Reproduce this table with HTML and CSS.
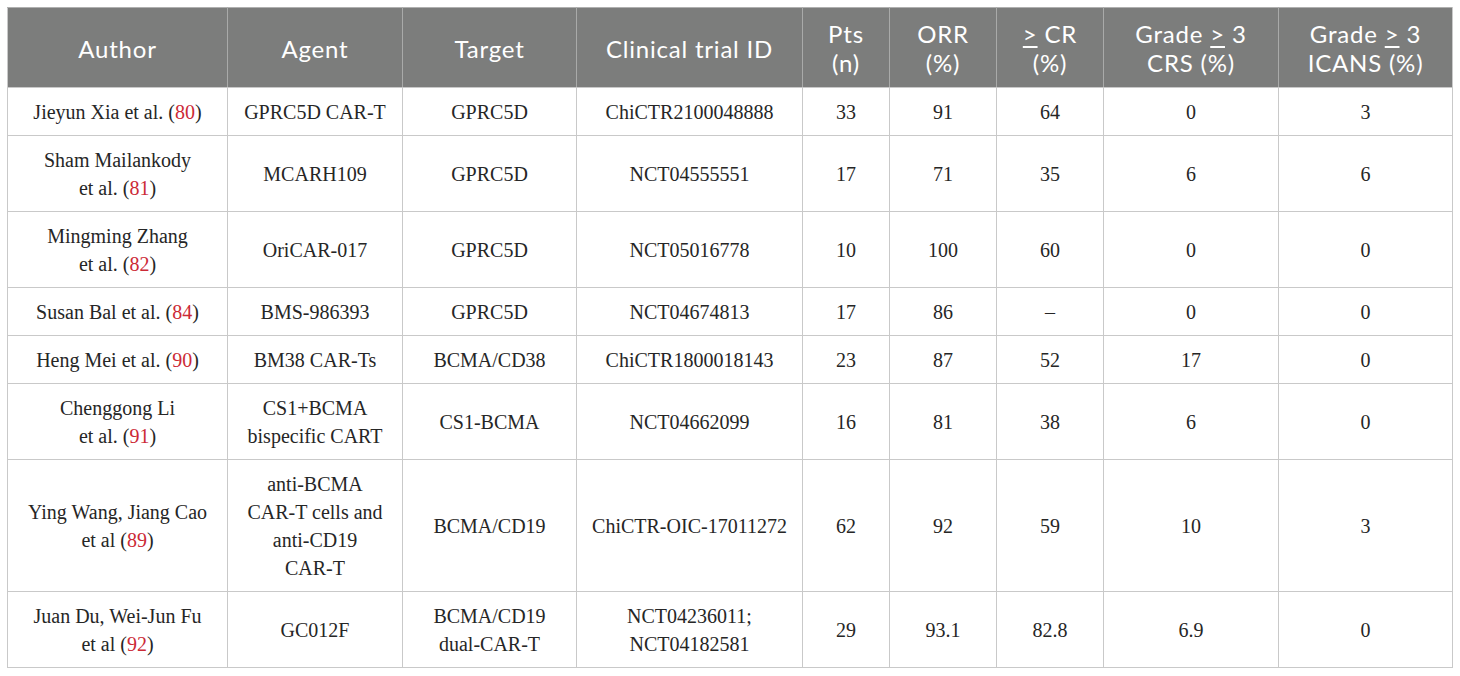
FILE: index.html
```html
<!DOCTYPE html>
<html lang="en">
<head>
<meta charset="utf-8">
<title>CAR-T trials</title>
<link rel="stylesheet" href="styles.css">
</head>
<body>
<table class="trials">
  <colgroup>
    <col class="c-author">
    <col class="c-agent">
    <col class="c-target">
    <col class="c-trial">
    <col class="c-pts">
    <col class="c-orr">
    <col class="c-cr">
    <col class="c-crs">
    <col class="c-icans">
  </colgroup>
  <thead>
    <tr>
      <th>Author</th>
      <th>Agent</th>
      <th>Target</th>
      <th>Clinical trial ID</th>
      <th>Pts<br>(n)</th>
      <th>ORR<br>(%)</th>
      <th><u>&gt;</u> CR<br>(%)</th>
      <th>Grade <u>&gt;</u> 3<br>CRS (%)</th>
      <th>Grade <u>&gt;</u> 3<br>ICANS (%)</th>
    </tr>
  </thead>
  <tbody>
    <tr>
      <td>Jieyun Xia et al. (<span class="ref">80</span>)</td>
      <td>GPRC5D CAR-T</td>
      <td>GPRC5D</td>
      <td>ChiCTR2100048888</td>
      <td>33</td><td>91</td><td>64</td><td>0</td><td>3</td>
    </tr>
    <tr>
      <td>Sham Mailankody<br>et al. (<span class="ref">81</span>)</td>
      <td>MCARH109</td>
      <td>GPRC5D</td>
      <td>NCT04555551</td>
      <td>17</td><td>71</td><td>35</td><td>6</td><td>6</td>
    </tr>
    <tr>
      <td>Mingming Zhang<br>et al. (<span class="ref">82</span>)</td>
      <td>OriCAR-017</td>
      <td>GPRC5D</td>
      <td>NCT05016778</td>
      <td>10</td><td>100</td><td>60</td><td>0</td><td>0</td>
    </tr>
    <tr>
      <td>Susan Bal et al. (<span class="ref">84</span>)</td>
      <td>BMS-986393</td>
      <td>GPRC5D</td>
      <td>NCT04674813</td>
      <td>17</td><td>86</td><td>–</td><td>0</td><td>0</td>
    </tr>
    <tr>
      <td>Heng Mei et al. (<span class="ref">90</span>)</td>
      <td>BM38 CAR-Ts</td>
      <td>BCMA/CD38</td>
      <td>ChiCTR1800018143</td>
      <td>23</td><td>87</td><td>52</td><td>17</td><td>0</td>
    </tr>
    <tr>
      <td>Chenggong Li<br>et al. (<span class="ref">91</span>)</td>
      <td>CS1+BCMA<br>bispecific CART</td>
      <td>CS1-BCMA</td>
      <td>NCT04662099</td>
      <td>16</td><td>81</td><td>38</td><td>6</td><td>0</td>
    </tr>
    <tr>
      <td>Ying Wang, Jiang Cao<br>et al (<span class="ref">89</span>)</td>
      <td>anti-BCMA<br>CAR-T cells and<br>anti-CD19<br>CAR-T</td>
      <td>BCMA/CD19</td>
      <td>ChiCTR-OIC-17011272</td>
      <td>62</td><td>92</td><td>59</td><td>10</td><td>3</td>
    </tr>
    <tr>
      <td>Juan Du, Wei-Jun Fu<br>et al (<span class="ref">92</span>)</td>
      <td>GC012F</td>
      <td>BCMA/CD19<br>dual-CAR-T</td>
      <td>NCT04236011;<br>NCT04182581</td>
      <td>29</td><td>93.1</td><td>82.8</td><td>6.9</td><td>0</td>
    </tr>
  </tbody>
</table>
</body>
</html>
```

FILE: styles.css
```css
html, body {
  margin: 0;
  padding: 0;
  background: #ffffff;
}

body {
  padding: 7px 0 0 7px;
}

.trials {
  border-collapse: collapse;
  table-layout: fixed;
  width: 1446px;
  border: 1px solid #c9c9c9;
}

.c-author { width: 220px; }
.c-agent  { width: 175px; }
.c-target { width: 174px; }
.c-trial  { width: 226px; }
.c-pts    { width: 87px; }
.c-orr    { width: 107px; }
.c-cr     { width: 107px; }
.c-crs    { width: 175px; }
.c-icans  { width: 174px; }

.trials th {
  background: #7c7d7c;
  color: #ffffff;
  font-family: Lato, "Open Sans", sans-serif;
  font-weight: 400;
  font-size: 24px;
  letter-spacing: 0.8px;
  line-height: 29px;
  padding: 11px 4px 10px;
  text-align: center;
  vertical-align: middle;
  border: 1px solid #c9c9c9;
  border-left-color: #a9aaa9;
  border-right-color: #a9aaa9;
  border-top-color: #b0b0b0;
}

.trials th:first-child { border-left-color: #c9c9c9; }
.trials th:last-child { border-right-color: #c9c9c9; }

.trials th u {
  text-decoration-thickness: 1.5px;
  text-underline-offset: 3px;
}

.trials td {
  font-family: "Liberation Serif", "Times New Roman", serif;
  font-size: 20px;
  line-height: 28px;
  color: #262626;
  padding: 10px 4px 9px;
  text-align: center;
  vertical-align: middle;
  border: 1px solid #c9c9c9;
}

.ref {
  color: #cc2a36;
}
```
